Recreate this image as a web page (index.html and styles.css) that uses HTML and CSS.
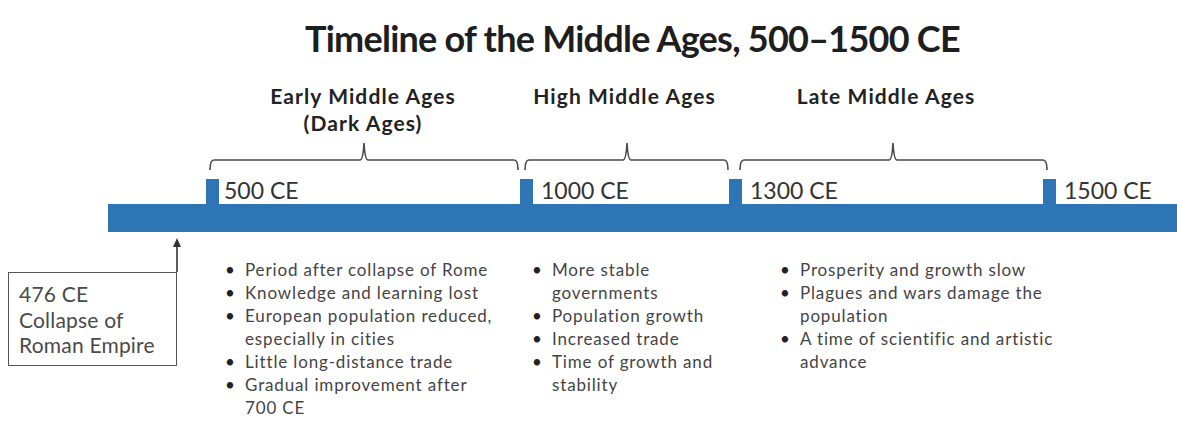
FILE: index.html
```html
<!DOCTYPE html>
<html lang="en">
<head>
<meta charset="utf-8">
<title>Timeline of the Middle Ages</title>
<link rel="stylesheet" href="styles.css">
</head>
<body>
<div class="page">
  <h1 class="title">Timeline of the Middle Ages, 500–1500 CE</h1>

  <div class="periods">
    <div></div>
    <div class="period">Early Middle Ages<br>(Dark Ages)</div>
    <div class="period">High Middle Ages</div>
    <div class="period">Late Middle Ages</div>
    <div></div>
  </div>

  <svg class="brackets" width="1177" height="32" viewBox="0 0 1177 32" aria-hidden="true">
    <path d="M210,30 Q210,20 214,20 H360 Q363,20 364,3 Q365,20 368,20 H514 Q518,20 518,30"/>
    <path d="M525,30 Q525,20 529,20 H623 Q626,20 627,3 Q628,20 631,20 H724 Q728,20 728,30"/>
    <path d="M740,30 Q740,20 744,20 H889 Q892,20 893,3 Q894,20 897,20 H1043 Q1047,20 1047,30"/>
  </svg>

  <div class="dates">
    <div></div>
    <div class="date"><span class="tick"></span><span class="date-label">500 CE</span></div>
    <div class="date date-wide"><span class="tick"></span><span class="date-label">1000 CE</span></div>
    <div class="date date-wide"><span class="tick"></span><span class="date-label">1300 CE</span></div>
    <div class="date date-wide"><span class="tick"></span><span class="date-label">1500 CE</span></div>
  </div>

  <div class="bar"></div>

  <div class="notes">
    <div class="callout">
      <svg class="arrow" width="12" height="34" viewBox="0 0 12 34" aria-hidden="true">
        <path class="arrow-line" d="M6,6 V34"/>
        <path class="arrow-head" d="M6,0 L10,9 L2,9 Z"/>
      </svg>
      <div class="callout-box">476 CE<br>Collapse of<br>Roman Empire</div>
    </div>
    <ul class="list list-early">
      <li>Period after collapse of Rome</li>
      <li>Knowledge and learning lost</li>
      <li>European population reduced, especially in cities</li>
      <li>Little long-distance trade</li>
      <li>Gradual improvement after 700 CE</li>
    </ul>
    <ul class="list list-high">
      <li>More stable governments</li>
      <li>Population growth</li>
      <li>Increased trade</li>
      <li>Time of growth and stability</li>
    </ul>
    <ul class="list list-late">
      <li>Prosperity and growth slow</li>
      <li>Plagues and wars damage the population</li>
      <li>A time of scientific and artistic advance</li>
    </ul>
  </div>
</div>
</body>
</html>
```

FILE: styles.css
```css
html, body {
  margin: 0;
  padding: 0;
  background: #ffffff;
}

.page {
  width: 1177px;
  height: 421px;
  overflow: hidden;
  font-family: Lato, "Noto Sans", sans-serif;
  color: #444;
}

.title {
  margin: 0;
  padding: 16px 0 0 305px;
  height: 44px;
  line-height: 44px;
  font-family: Lato, "Liberation Sans", sans-serif;
  font-weight: 700;
  font-size: 36px;
  letter-spacing: -0.75px;
  color: #1e1e1e;
  white-space: nowrap;
}

.periods {
  display: grid;
  grid-template-columns: 206px 314px 209px 314px 134px;
  margin-top: 22px;
  height: 58px;
}

.period {
  text-align: center;
  font-weight: 700;
  font-size: 21px;
  line-height: 27px;
  letter-spacing: 1.1px;
  color: #222;
}

.brackets {
  display: block;
}

.brackets path {
  fill: none;
  stroke: #4a4a4a;
  stroke-width: 1.6;
}

.dates {
  display: grid;
  grid-template-columns: 206px 314px 209px 314px 134px;
  height: 32px;
}

.date {
  display: flex;
  align-items: flex-end;
  gap: 5px;
}

.date-wide {
  gap: 8px;
}

.tick {
  width: 13px;
  height: 25px;
  background: #2e75b6;
  flex: none;
}

.date-label {
  font-size: 23px;
  line-height: 23px;
  margin-bottom: 2px;
  color: #333;
  white-space: nowrap;
}

.bar {
  margin-left: 108px;
  height: 28px;
  background: #2e75b6;
}

.notes {
  display: grid;
  grid-template-columns: 225px 307px 248px 1fr;
}

.callout {
  display: flex;
  flex-direction: column;
  align-items: flex-end;
  width: 183px;
  padding-top: 6px;
}

.arrow {
  display: block;
}

.arrow-line {
  stroke: #333;
  stroke-width: 1.6;
}

.arrow-head {
  fill: #333;
}

.callout-box {
  align-self: flex-start;
  margin-left: 8px;
  width: 147px;
  height: 84px;
  padding: 8px 10px 0 10px;
  border: 1.5px solid #555;
  font-size: 21px;
  line-height: 25.5px;
  letter-spacing: 0.2px;
  color: #4a4a4a;
}

.list {
  list-style: none;
  margin: 0;
  padding: 26px 0 0 0;
  font-size: 17px;
  line-height: 23px;
  letter-spacing: 0.85px;
  color: #444;
}

.list-early {
  width: 278px;
}

.list-high {
  width: 192px;
}

.list-late {
  width: 282px;
}

.list li {
  display: flex;
}

.list li::before {
  content: "•";
  flex: none;
  width: 20px;
  letter-spacing: 0;
  color: #222;
}
```
